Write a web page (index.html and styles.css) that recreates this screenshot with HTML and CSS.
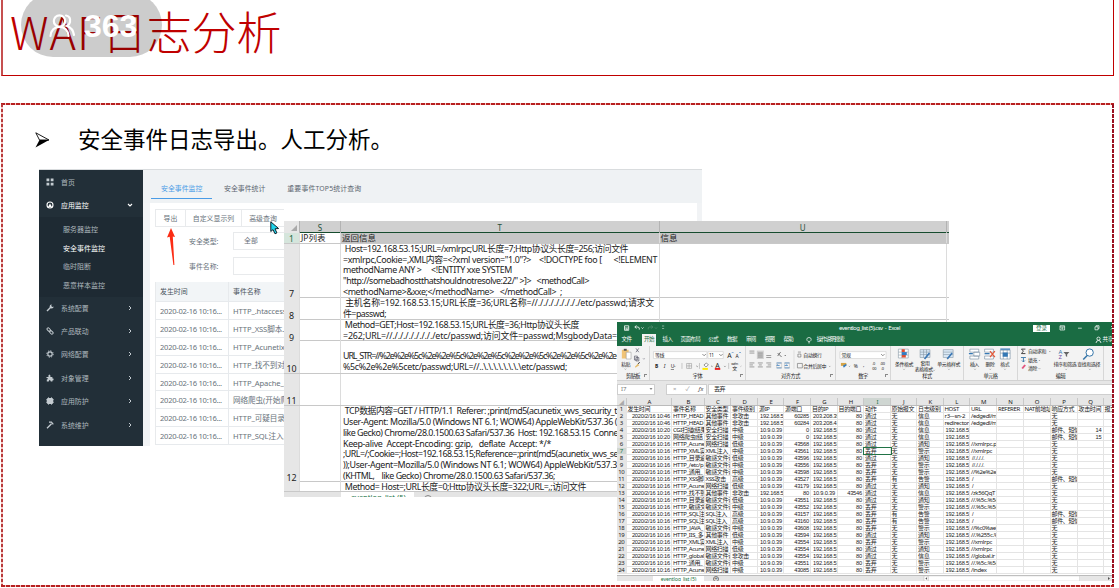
FILE: index.html
```html
<!DOCTYPE html>
<html>
<head>
<meta charset="utf-8">
<title>WAF日志分析</title>
<link rel="stylesheet" href="styles.css">
</head>
<body>
<main class="slide">
  <header class="title-box"><h1><span data-w="92">WAF</span><span class="title-cjk">日志分析</span></h1></header>
  <section class="content-box">
    <div class="bullet">
      <svg width="15" height="16" viewBox="0 0 15 16"><path d="M.8.8 14 8 4.500 8Z" fill="#fff" stroke="#000" stroke-width=".9"/><path d="M.5 15.500 4.500 8H14Z"/></svg>
      <p>安全事件日志导出。人工分析。</p>
    </div>
  </section>

  <section class="console">
    <nav class="side">
      <div class="item home"><svg viewBox="0 0 8 8"><path d="M.5.5h2.800v2.800H.5zM4.700.5h2.800v2.800H4.700zM.5 4.700h2.800v2.800H.5zM4.700 4.700h2.800v2.800H4.700z" fill="#c3cbd0"/></svg><span>首页</span></div>
      <div class="item open"><svg viewBox="0 0 8 8"><circle cx="4" cy="4" r="3" fill="none" stroke="#fff" stroke-width="1.1"/><path d="M2 6 4 2.600 6 6Z" fill="#fff"/></svg><span>应用监控</span><svg class="chev" viewBox="0 0 6 6"><path d="M1 2l2 2 2-2" fill="none" stroke="#fff" stroke-width="1.1"/></svg></div>
      <div class="sub"><span>服务器监控</span><span class="on">安全事件监控</span><span>临时阻断</span><span>恶意样本监控</span></div>
      <div class="item"><svg viewBox="0 0 8 8"><path d="M1 7 4.700 3.300" stroke="#c3cbd0" stroke-width="1.4"/><path d="M5.800.5A2 2 0 1 0 7.600 2.400L6.400 3 5.200 2Z" fill="#c3cbd0"/></svg><span>系统配置</span><svg class="chev" viewBox="0 0 6 6"><path d="M2 1l2 2-2 2" fill="none" stroke="#c3cbd0"/></svg></div>
      <div class="item"><svg viewBox="0 0 8 8"><g fill="none" stroke="#c3cbd0"><rect x=".8" y="1.4" width="3.8" height="2.4" rx="1.2" transform="rotate(45 2.7 2.6)"/><rect x="3.5" y="4.2" width="3.8" height="2.4" rx="1.2" transform="rotate(45 5.4 5.4)"/></g></svg><span>产品联动</span><svg class="chev" viewBox="0 0 6 6"><path d="M2 1l2 2-2 2" fill="none" stroke="#c3cbd0"/></svg></div>
      <div class="item"><svg viewBox="0 0 8 8"><circle cx="4" cy="4" r="2.2" fill="none" stroke="#c3cbd0" stroke-width="1.2"/><circle cx="4" cy="4" r="3.2" fill="none" stroke="#c3cbd0" stroke-dasharray="1.3 1.2"/></svg><span>网络配置</span><svg class="chev" viewBox="0 0 6 6"><path d="M2 1l2 2-2 2" fill="none" stroke="#c3cbd0"/></svg></div>
      <div class="item"><svg viewBox="0 0 8 8"><path d="M.5 3h2Q2 .5 3.400.5T4.400 3H6.400V4.600Q8 4.300 7.600 5.600T6.400 6.200V7.500H4.800Q4.500 6 3.700 6T2.800 7.500H.8V5.600Q2 5.200 2 4.700T.5 4Z" fill="#c3cbd0"/></svg><span>对象管理</span><svg class="chev" viewBox="0 0 6 6"><path d="M2 1l2 2-2 2" fill="none" stroke="#c3cbd0"/></svg></div>
      <div class="item"><svg viewBox="0 0 8 8"><rect x="1" y="1" width="6" height="6" rx="1" fill="#c3cbd0"/><path d="M0 2.500h8M0 4h8M0 5.500h8M2.500 0v8M5.500 0v8" stroke="#c3cbd0" stroke-width=".6"/></svg><span>应用防护</span><svg class="chev" viewBox="0 0 6 6"><path d="M2 1l2 2-2 2" fill="none" stroke="#c3cbd0"/></svg></div>
      <div class="item"><svg viewBox="0 0 8 8"><path d="M1 7.200 5.500 2.700M3 1.200h2.400L7.300 3.400" fill="none" stroke="#c3cbd0" stroke-width="1.3"/></svg><span>系统维护</span><svg class="chev" viewBox="0 0 6 6"><path d="M2 1l2 2-2 2" fill="none" stroke="#c3cbd0"/></svg></div>
    </nav>
    <div class="console-main">
      <div class="tabs"><span class="active">安全事件监控</span><span>安全事件统计</span><span data-w="74">重要事件TOP5统计查询</span></div>
      <div class="panel">
        <div class="buttons"><span class="b1">导出</span><span class="b2">自定义显示列</span><span class="b3">高级查询</span></div>
        <div class="field"><label>安全类型:</label><div class="input">全部</div></div>
        <div class="field second"><label>事件名称:</label><div class="input"></div></div>
        <div class="events" id="events"></div>
      </div>
    </div>
  </section>

  <svg class="red-arrow" width="12" height="38" viewBox="0 0 12 38"><path d="M5 0 9 9 6.800 8.600 8.400 37 7.400 37 3.700 8.800 1 9.400Z" fill="#fb2c14"/></svg>

  <section class="sheet">
    <div class="srow letters"><b><i class="corner"></i></b><div>S</div><div>T</div><div>U</div><div></div></div>
    <div class="srow first"><b>1</b><div class="s1">JP列表</div><div>返回信息</div><div>信息</div><div></div></div>
    <div class="srow r7"><b>7</b><div></div><div class="t">
<p data-w="285"> Host=192.168.53.15;URL=/xmlrpc;URL长度=7;Http协议头长度=256;访问文件</p>
<p data-w="314">=xmlrpc,Cookie=,XML内容=&lt;?xml version="1.0"?&gt;    &lt;!DOCTYPE foo [      &lt;!ELEMENT</p>
<p data-w="169">methodName ANY &gt;     &lt;!ENTITY xxe SYSTEM</p>
<p data-w="246">"http://somebadhostthatshouldnotresolve:22/" &gt;]&gt;   &lt;methodCall&gt;</p>
<p data-w="219">&lt;methodName&gt;&amp;xxe;&lt;/methodName&gt;   &lt;/methodCall&gt;  ;</p></div><div></div><div></div></div>
    <div class="srow r8"><b>8</b><div></div><div class="t">
<p data-w="311"> 主机名称=192.168.53.15;URL长度=36;URL名称=//././././././././etc/passwd;请求文</p>
<p data-w="43">件=passwd;</p></div><div></div><div></div></div>
    <div class="srow r9"><b>9</b><div></div><div class="t">
<p data-w="236"> Method=GET;Host=192.168.53.15;URL长度=36;Http协议头长度</p>
<p data-w="274">=262;URL=//././././././././etc/passwd;访问文件=passwd;MsgbodyData=</p></div><div></div><div></div></div>
    <div class="srow r10"><b>10</b><div></div><div class="t">
<p data-w="273">URL_STR=//%2e%2e%5c%2e%2e%5c%2e%2e%5c%2e%2e%5c%2e%2e%5c%2e%2e</p>
<p data-w="224">%5c%2e%2e%5cetc/passwd;URL=//..\.\.\.\.\.\.\.\etc/passwd;</p></div><div></div><div></div></div>
    <div class="srow r11"><b>11</b><div></div><div></div><div></div><div></div></div>
    <div class="srow r12"><b>12</b><div></div><div class="t">
<p data-w="274"> TCP数据内容=GET / HTTP/1.1  Referer: ;print(md5(acunetix_wvs_security_t</p>
<p data-w="274">User-Agent: Mozilla/5.0 (Windows NT 6.1; WOW64) AppleWebKit/537.36 (</p>
<p data-w="275">like Gecko) Chrome/28.0.1500.63 Safari/537.36  Host: 192.168.53.15  Conne</p>
<p data-w="208">Keep-alive  Accept-Encoding: gzip,   deflate  Accept: */*</p>
<p data-w="275">;URL=/;Cookie=;Host=192.168.53.15;Reference=;print(md5(acunetix_wvs_se</p>
<p data-w="274">));User-Agent=Mozilla/5.0 (Windows NT 6.1; WOW64) AppleWebKit/537.3</p>
<p data-w="212">(KHTML,    like Gecko) Chrome/28.0.1500.63 Safari/537.36;</p></div><div></div><div></div></div>
    <div class="srow r13"><b></b><div></div><div class="t"><p data-w="243"> Method= Host=;URL长度=0;Http协议头长度=322;URL=,;访问文件</p></div><div></div><div></div></div>
    <div class="sheet-tabs"><span>eventlog_list (5)</span><i></i></div>
  </section>

  <svg class="pointer" width="10" height="14" viewBox="0 0 10 14"><path d="M.8.8V10.500L3 8.600 5 12.800 6.900 11.900 5 7.800 8.600 7.500Z" fill="#1fd3ea" stroke="#10222c" stroke-width="1"/></svg>

  <section class="excel">
    <div class="titlebar">
      <svg class="quick" width="60" height="12" viewBox="0 0 60 12" fill="none" stroke="#fff" stroke-width=".8"><path d="M7.500 3.800h4.200v4.500H7.500zM7.500 6h4.200M9 8v-1h1.300v1M18 5h3q1.800.2 1.300 2.600M19.400 3.400 17.800 5l1.600 1.600"/><path d="M24.500 5.500l1 1 1-1"/><path d="M35.500 5h-3q-1.800.2-1.300 2.400M34.300 3.400 35.800 5l-1.500 1.600M38 5.500l1 1 1-1" stroke="#548e70"/><path d="M45 4h2.200M45.100 6l1 1 1-1" stroke="#9dc0ad"/></svg>
      <span class="doc" data-w="61">eventlog_list (5).csv  -  Excel</span>
      <span class="login">登录</span>
      <svg class="controls" width="63" height="12" viewBox="0 0 63 12" fill="none" stroke="#fff" stroke-width=".7"><path d="M10 3.800h4.600v4.200H10zM10 5h4.600M12.300 7.500V5.800M11.500 6.500l.8-.8.8.8M28 6.200h3.800M45 4.800h3v3h-3zM46 4.600V3.700h3v3h-.8M61 4l3.500 3.500M64.500 4 61 7.500"/></svg>
    </div>
    <div class="menubar">
      <span class="m m-file">文件</span><span class="m m-on">开始</span><span class="m">插入</span><span class="m m-wide">页面布局</span><span class="m">公式</span><span class="m">数据</span><span class="m">审阅</span><span class="m">视图</span><span class="m">帮助</span>
      <svg width="10" height="10" viewBox="0 0 10 10" fill="none" stroke="#fff" stroke-width=".7"><path d="M4 6.400Q2.700 5.500 2.800 4.200 3 2.500 5 2.500T7.200 4.200Q7.300 5.500 6 6.400ZM4.200 7.800h1.700"/></svg><span class="tell">操作说明搜索</span>
      <span class="share"><svg width="7" height="8" viewBox="0 0 7 8" fill="none" stroke="#fff" stroke-width=".8"><circle cx="3.5" cy="2.7" r="1.6"/><path d="M1 7q.4-2.600 2.500-2.600T6 7"/></svg>共享</span>
    </div>
    <div class="ribbon">
      <div class="group g1"><svg viewBox="0 0 33 26"><path d="M5 3.500h7v9H5z" fill="#f1c477"/><path d="M7 2.500h3v2H7z" fill="#555"/><path d="M9.500 6h5v7h-5z" fill="#fff" stroke="#888" stroke-width=".5"/><g stroke="#556" stroke-width=".7" fill="none"><path d="M19.500 2l3 4M22.500 2l-3 4M18 10h3v4h-3zM19.500 11.500h3v3.500h-3z"/><path d="M27 12.500l.7.7.7-.7"/></g><path d="M18.500 21l3-3 1.500 1.500-4 2.500z" fill="#e5bd6d"/><path d="M21.500 18l2-1.500" stroke="#333"/><text x="4.500" y="20">粘贴</text><path d="M8 23l.7.7.7-.7" fill="none" stroke="#555" stroke-width=".5"/></svg><span>剪贴板</span><i></i></div>
      <div class="group g2"><svg viewBox="0 0 96 26"><path d="M3.500 5.500h54v7h-54zM58.500 5.500h15.500v7H58.500z" fill="#fff" stroke="#ccc" stroke-width=".6"/><text x="5" y="11">等线</text><text x="59.500" y="11">11</text><g fill="none" stroke="#555" stroke-width=".7"><path d="M53 8l1.700 1.700L56.400 8M70 8l1.700 1.700L73.400 8M24.500 20l.7.7.7-.7M47 20l.7.7.7-.7M62 20l.7.7.7-.7M75 20l.7.7.7-.7"/></g><text x="78" y="11.500" class="big">A</text><text x="86.500" y="11.500">A</text><path d="M82.500 7l1-1 1 1M90 7l1-1 1 1" fill="none" stroke="#347bc0" stroke-width=".6"/><text x="5" y="22.500" class="bold">B</text><text x="14" y="22.500" class="ital">I</text><text x="21" y="22.500" class="under">U</text><path d="M37 17.500h5v5h-5zM39.500 17.500v5M37 20h5" fill="none" stroke="#888" stroke-width=".5"/><path d="M54.500 19l2.500-2 2 2-2.500 2z" fill="#fff" stroke="#555" stroke-width=".6"/><path d="M53 22h5.500v2H53z" fill="#ffeb00"/><text x="66" y="21.700" class="big">A</text><path d="M65.500 22h5.500v2h-5.500z" fill="#e82020"/><text x="82" y="18.600" class="tiny">wén</text><text x="83" y="24">文</text><path d="M91 20l.7.7.7-.7M32.300 17v6M50 17v6M79.500 17v6" fill="none" stroke="#999" stroke-width=".5"/></svg><span>字体</span><i></i></div>
      <div class="group g3"><svg viewBox="0 0 90 26"><path d="M11 4.500h7v8.500h-7z" fill="#cfcfcf"/><g stroke="#777" stroke-width=".7"><path d="M3.500 5h5M3.500 7h5M12 7h5M12 9h5M12 11h5M20.500 9.500h5M20.500 11.500h5M3.500 17h5M3.500 19h3.500M3.500 21h5M12 17h5M13 19h3M12 21h5M20.500 17h5M22 19h3.500M20.500 21h5"/></g><path d="M32 7l4 4M32 10l3-4M39 9l.7.7.7-.7" fill="none" stroke="#555" stroke-width=".8"/><g fill="none" stroke="#347bc0" stroke-width=".8"><path d="M31 17h5M31 22h5M34 19.500h-3l1-1M39 17h5M39 22h5M39 19.500h3l-1-1"/></g><path d="M31 17h5v5h-5zM39 17h5v5h-5z" fill="none" stroke="#aaa" stroke-width=".4"/><path d="M52.500 6h3M52.500 8h3v3h-3v-3M52 17.500h5v4.500h-5z" fill="none" stroke="#666" stroke-width=".6"/><path d="M48.500 4v19" stroke="#ccc" stroke-width=".5"/><text x="58" y="11">自动换行</text><text x="58" y="22">合并后居中</text><path d="M84 20l.7.7.7-.7" fill="none" stroke="#555" stroke-width=".5"/></svg><span>对齐方式</span><i></i></div>
      <div class="group g4"><svg viewBox="0 0 55 26"><path d="M4 5.500h47v7H4z" fill="#fff" stroke="#ccc" stroke-width=".6"/><text x="5.500" y="11">常规</text><path d="M46 8l1.700 1.700L49.400 8" fill="none" stroke="#555" stroke-width=".7"/><path d="M5 17h5.500v3H5z" fill="#d5a447"/><path d="M7 20l3-2 1 1-3 3z" fill="#347bc0"/><path d="M13 20l.7.7.7-.7" fill="none" stroke="#555" stroke-width=".5"/><text x="18" y="22.500">%</text><text x="27.500" y="21">,</text><text x="37" y="19" class="tiny">.0</text><text x="37" y="24" class="tiny">00</text><text x="45" y="19" class="tiny">.00</text><text x="46" y="24" class="tiny">.0</text></svg><span>数字</span><i></i></div>
      <div class="group g5"><svg viewBox="0 0 73 26"><path d="M7.500 3h10v9h-10zM7.500 6h10M7.500 9h10M11 3v9" fill="#fff" stroke="#8797a5" stroke-width=".6"/><path d="M11 3h3v3h-3zM11 9h4v2.500h-4z" fill="#e24e31"/><path d="M11 6h5v3h-5z" fill="#347bc0"/><path d="M29.500 3.500h10v8h-10zM29.500 6h10M29.500 8.500h10M33 3.500v8M36 3.500v8M53 3.500h10v8H53zM53 6h10M53 8.500h10" fill="#d9e8f5" stroke="#8797a5" stroke-width=".6"/><path d="M34 13l5-6M57 13l5-6" stroke="#3b78b5" stroke-width="1.700"/><text x="4" y="20">条件格式</text><text x="30" y="19.300">套用</text><text x="24" y="25.300">表格格式</text><text x="47" y="20">单元格样式</text><path d="M12.500 23l.7.7.7-.7M43 24l.7.7.7-.7M58 23l.7.7.7-.7" fill="none" stroke="#555" stroke-width=".5"/></svg><span>样式</span></div>
      <div class="group g6"><svg viewBox="0 0 54 26"><path d="M6 3h9v3H6zM10 6h6v4h-6zM6 10h9v3H6zM21 3h9v3h-9zM21 10h9v3h-9zM37 4h10v9H37zM37 7h10M40 4v9M44 4v9" fill="#fff" stroke="#70889b" stroke-width=".6"/><path d="M5 7.500h4M21 7.500h5M40 7h4v3h-4zM37 3h10" stroke="#3478b5" stroke-width="1.200" fill="#3478b5"/><path d="M26.500 5l5 6M31.500 5l-5 6" stroke="#e45635" stroke-width="1.200"/><text x="6" y="20">插入</text><text x="22" y="20">删除</text><text x="37" y="20">格式</text><path d="M10.500 23l.7.7.7-.7M26 23l.7.7.7-.7M41 23l.7.7.7-.7" fill="none" stroke="#555" stroke-width=".5"/></svg><span>单元格</span></div>
      <div class="group g7"><svg viewBox="0 0 86 26"><path d="M7.500 3h-4l2 2-2 2.500h4" fill="none" stroke="#333" stroke-width=".9"/><text x="10" y="7">自动求和</text><path d="M3 11.500h5M5.500 12v4M4 14.500l1.500 1.500L7 14.500" fill="none" stroke="#3474a8" stroke-width=".9"/><text x="10" y="16">填充</text><path d="M3.500 22l3-3.500 1.500 1-3 3.500z" fill="#e2567e"/><text x="10" y="24.500">清除</text><path d="M31.500 5l.7.7.7-.7M21 14l.7.7.7-.7M21 22.500l.7.7.7-.7M48 23l.7.7.7-.7M72 23l.7.7.7-.7" fill="none" stroke="#555" stroke-width=".5"/><text x="41" y="7.500" class="blue">A</text><text x="41" y="13" class="purple">Z</text><path d="M46 6h6l-2.300 2.500V11l-1.400-1V8.500z" fill="#666"/><circle cx="72.500" cy="6.500" r="3.700" fill="#fff" stroke="#3474a8"/><path d="M70 9.500l-4 4" stroke="#3474a8" stroke-width="1.500"/><text x="36" y="20">排序和筛选</text><text x="60" y="20">查找和选择</text></svg><span>编辑</span></div>
    </div>
    <div class="formula"><div class="name"><span>I7</span><svg width="6" height="6" viewBox="0 0 6 6"><path d="M1.500 2h3L3 4z" fill="#888"/></svg></div><div class="fx"><span>×</span><span>✓</span><em>fx</em></div><div class="value">丢弃</div></div>
    <div class="grid" id="grid"></div>
    <div class="excel-tabs"><span class="book">eventlog_list (5)</span><i>+</i><svg width="195" height="7" viewBox="0 0 195 7"><path d="M2 3.500v.1M6 1h4v5H6z" fill="#fff" stroke="#bbb" stroke-width=".5"/><path d="M9 2.200v2.500L7.300 3.500z" fill="#555"/><path d="M10.500 1h151v5h-151z" fill="#fff" stroke="#ccc" stroke-width=".5"/><path d="M190 2v3l2-1.500z" fill="#555"/></svg></div>
  </section>

  <i class="edge edge-top"></i><i class="edge edge-left"></i><i class="edge edge-right"></i><i class="edge edge-bottom"></i>

  <div class="viewers">
    <svg width="27" height="24" viewBox="0 0 27 24" fill="none" stroke="#fff" stroke-width="2.200" stroke-linecap="round"><circle cx="10.500" cy="7" r="5.700"/><path d="M1.500 22Q2.500 13 10.500 13T19.500 22M17 1.500q5 1 4 6.500-.6 3-3 4 6 2 7 9"/></svg>
    <span>363</span>
  </div>
</main>
<script src="app.js"></script>
</body>
</html>
```
FILE: app.js
```js
function add(parent, cls, text) {
  const el = document.createElement('div');
  el.className = cls;
  if (text !== undefined) el.textContent = text;
  parent.appendChild(el);
  return el;
}

// Event list in the console
const events = document.getElementById('events');
const names = ['HTTP_.htaccess..', 'HTTP_XSS脚本...', 'HTTP_Acunetix..', 'HTTP_找不到对象', 'HTTP_Apache_...', '网络爬虫(开始爬', 'HTTP_可疑目录..', 'HTTP_SQL注入...'];
const head = add(events, 'ev head');
add(head, 'c1', '发生时间');
add(head, 'c2', '事件名称');
names.forEach(n => {
  const r = add(events, 'ev');
  add(r, 'c1', '2020-02-16 10:16...');
  add(r, 'c2', n);
});

// Exported log grid
const T46 = '2020/2/16 10:46', T20 = '2020/2/16 10:20', T16 = '2020/2/16 10:16';
const IP = '192.168.53', IN = '10.9.0.39', MAIL = '邮件、短信';
const rows = [
  ['发生时间', '事件名称', '安全类型', '事件级别', '源IP', '源端口', '目的IP', '目的端口', '动作', '原始报文', '日志级别', 'HOST', 'URL', 'REFERER', 'NAT前地址', '响应方式', '攻击时间', '报文'],
  [T46, 'HTTP_HEAD', '其他事件', '非攻击', IP, '60285', '203.208.39', '80', '通过', '无', '信息', 'r3---sn-2', '/edgedl/m', '', '', '无', ''],
  [T46, 'HTTP_HEAD', '其他事件', '非攻击', IP, '60284', '203.208.41', '80', '通过', '无', '信息', 'redirector', '/edgedl/m', '', '', '无', ''],
  [T20, 'CGI扫描(结果', '安全扫描', '中级', IN, '0', IP, '80', '通过', '无', '信息', IP, '', '', '', MAIL, '14'],
  [T20, '网络爬虫(结', '安全扫描', '中级', IN, '0', IP, '80', '通过', '无', '信息', IP, '', '', '', MAIL, '15'],
  [T16, 'HTTP_Acune', '网络扫描', '低级', IN, '43568', IP, '80', '通过', '无', '通知', IP, '//xmlrpc.p', '', '', '无', ''],
  [T16, 'HTTP_XML实', 'XML注入', '中级', IN, '43561', IP, '80', '丢弃', '无', '警示', IP, '//xmlrpc', '', '', '无', ''],
  [T16, 'HTTP_目录遍', '敏感文件访', '低级', IN, '43596', IP, '80', '通过', '无', '通知', IP, '//./././.', '', '', '无', ''],
  [T16, 'HTTP_/etc/p', '敏感文件访', '中级', IN, '43556', IP, '80', '丢弃', '无', '警示', IP, '//./././.', '', '', '无', ''],
  [T16, 'HTTP_通用_', '敏感文件访', '中级', IN, '43598', IP, '80', '丢弃', '无', '警示', IP, '//%2e%2e%', '', '', '无', ''],
  [T16, 'HTTP_XSS脚', 'XSS攻击', '高级', IN, '43527', IP, '80', '丢弃', '有', '告警', IP, '/', '', '', MAIL, ''],
  [T16, 'HTTP_Acune', '网络扫描', '低级', IN, '43179', IP, '80', '通过', '无', '通知', IP, '/', '', '', '无', ''],
  [T16, 'HTTP_找不到', '其他事件', '非攻击', IP, '80', '10.9.0.39', '43546', '通过', '无', '信息', IP, '/zk56QqT', '', '', '无', ''],
  [T16, 'HTTP_目录遍', '敏感文件访', '低级', IN, '43551', IP, '80', '通过', '无', '通知', IP, '//.%5c.%5c', '', '', '无', ''],
  [T16, 'HTTP_敏感文', '敏感文件访', '中级', IN, '43552', IP, '80', '丢弃', '无', '警示', IP, '//.%5c.%5c', '', '', '无', ''],
  [T16, 'HTTP_SQL注', 'SQL注入', '高级', IN, '43157', IP, '80', '丢弃', '有', '告警', IP, '/', '', '', MAIL, ''],
  [T16, 'HTTP_SQL注', 'SQL注入', '高级', IN, '43160', IP, '80', '丢弃', '有', '告警', IP, '/', '', '', MAIL, ''],
  [T16, 'HTTP_JAVA_', '敏感文件访', '中级', IN, '43608', IP, '80', '丢弃', '无', '警示', IP, '//%c0%ae%', '', '', '无', ''],
  [T16, 'HTTP_IIS_多', '其他事件', '低级', IN, '43594', IP, '80', '通过', '无', '通知', IP, '//.%255c.%', '', '', '无', ''],
  [T16, 'HTTP_XML实', 'XML注入', '中级', IN, '43554', IP, '80', '丢弃', '无', '警示', IP, '//xmlrpc', '', '', '无', ''],
  [T16, 'HTTP_Acune', '网络扫描', '低级', IN, '43554', IP, '80', '通过', '无', '通知', IP, '//xmlrpc', '', '', '无', ''],
  [T16, 'HTTP_global', '敏感文件访', '非攻击', IN, '43554', IP, '80', '通过', '无', '信息', IP, '//global.ir', '', '', '无', ''],
  [T16, 'HTTP_通用_', '敏感文件访', '中级', IN, '43551', IP, '80', '丢弃', '无', '警示', IP, '//.%5c.%5c', '', '', '无', ''],
  [T16, 'HTTP_Acune', '网络扫描', '中级', IN, '43085', IP, '80', '丢弃', '无', '警示', IP, '/index', '', '', '无', '']
];
const grid = document.getElementById('grid');
const letters = add(grid, 'gr cols');
add(letters, 'num', '◢');
'ABCDEFGHIJKLMNOPQR'.split('').forEach(l => add(letters, l === 'I' ? 'picked' : '', l === 'R' ? '' : l));
rows.forEach((r, i) => {
  const row = add(grid, 'gr');
  add(row, i === 6 ? 'num picked' : 'num', i + 1);
  for (let c = 0; c < 18; c++) {
    const v = r[c] || '';
    let cls = '';
    if (i && [0, 5, 7, 16].includes(c)) cls = 'right';
    if (/^[\d./: ]+$/.test(v)) cls += ' digits';
    if (i === 6 && c === 8) cls += ' cursor';
    add(row, cls, v);
  }
});

// Track text so that each line fills its measured width
document.querySelectorAll('[data-w]').forEach(el => {
  const diff = +el.dataset.w - el.getBoundingClientRect().width;
  el.style.letterSpacing = diff / el.textContent.length + 'px';
});
```
FILE: styles.css
```css
* { box-sizing: border-box; }
body { margin: 0; background: #fff; font-family: "Noto Sans", "Noto Sans CJK SC", sans-serif; }
p, h1 { margin: 0; font-weight: 400; }
i, em { font-style: normal; }
[data-w] { display: inline-block; width: max-content; white-space: pre; }
.slide { position: relative; width: 1119px; height: 588px; overflow: hidden; }

/* Slide title and body */
.title-box { width: 1113px; height: 76px; margin-left: 1px; padding-left: 7px; border: solid #c00000; border-width: 0 1px 1.5px 2px; border-left-color: #c65050; }
.title-box h1 { display: flex; font: 300 45px/62px "Noto Sans CJK SC", sans-serif; color: #c00000; }
.title-cjk { letter-spacing: -.2px; }
.content-box { padding: 48px 0 0 35px; }
.bullet { display: flex; align-items: center; gap: 28px; height: 32px; }
.bullet p { font: 22.5px/32px "Noto Sans CJK SC", sans-serif; color: #000; margin-top: -4px; }
.edge { position: absolute; }
.edge-top, .edge-bottom { left: 1px; width: 1113px; height: 2px; background: repeating-linear-gradient(90deg, #b82020 0 4px, #f3c0bc 4px 5px); }
.edge-left, .edge-right { top: 104px; height: 483px; width: 2px; background: repeating-linear-gradient(#b83a3a 0 3px, #f6c6c2 3px 5px); }
.edge-top { top: 103px; }
.edge-bottom { top: 585px; }
.edge-left { left: 1px; }
.edge-right { left: 1112px; background: repeating-linear-gradient(#9c1020 0 4px, #fff 4px 5px); }

.viewers { position: absolute; left: 21px; top: -7px; width: 141px; height: 64px; padding: 1px 0 0 28px; border-radius: 32px; background: rgba(0,0,0,.2); display: flex; align-items: center; gap: 8px; }
.viewers span { font: bold 32px/36px "Liberation Sans", sans-serif; color: #fff; }

/* Monitoring console */
.console { position: absolute; left: 39px; top: 169px; width: 663px; height: 277px; display: flex; border-top: 1px solid #d9dcde; font-size: 6.9px; overflow: hidden; }
.side { width: 104px; background: #222f38; color: #aeb8be; }
.item { display: flex; align-items: center; height: 23.45px; padding: 0 10px 0 7px; }
.item span { flex: 1; margin-left: 7px; }
.item svg { width: 8px; height: 8px; }
.item .chev { width: 6px; height: 6px; }
.item.open { color: #fff; }
.sub { display: flex; flex-direction: column; height: 80px; margin-bottom: -1px; padding: 4px 0 0 24px; background: #1e2a33; font-size: 7px; }
.sub span { line-height: 18.7px; }
.sub .on { color: #fff; }
.console-main { flex: 1; background: linear-gradient(90deg, #f1f3f5 0 7px, transparent 7px 554px, #f1f3f5 554px) 0 33px no-repeat, linear-gradient(#eff2f4 0 33px, #fff 33px); padding-left: 8px; }
.tabs { display: flex; height: 29px; font-size: 6.9px; line-height: 37px; color: #5c6670; }
.tabs span { padding: 0; margin-right: 22px; }
.tabs .active { width: 61px; margin-right: 12px; padding-left: 10px; color: #4a9ce6; border-bottom: 1px solid #4a9ce6; }
.panel { padding: 10px 0 0 4px; color: #68727a; }
.buttons { display: flex; height: 18px; line-height: 17px; }
.buttons span { border: 1px solid #e8eaec; border-right: 0; text-align: center; white-space: nowrap; }
.b1 { width: 30px; }
.b2 { width: 56px; }
.b3 { width: 43px; }
.field { display: flex; align-items: center; margin-top: 4px; height: 19px; }
.field label { width: 78px; padding-left: 34px; white-space: nowrap; }
.input { width: 70px; height: 18px; padding-left: 10px; line-height: 16px; border: 1px solid #e8eaec; }
.field.second { margin-top: 6px; }
.events { width: 130px; margin-top: 7px; border-left: 1px solid #e8eaec; }
.ev { display: flex; height: 17.9px; line-height: 18px; border-bottom: 1px solid #e7eaed; font-size: 7.6px; white-space: nowrap; overflow: hidden; }
.ev.head { height: 20px; line-height: 20px; background: #f2f5f7; color: #48525b; font-size: 6.9px; }
.c1 { flex: none; width: 73px; padding-left: 4px; border-right: 1px solid #e7eaed; letter-spacing: -.28px; }
.head .c1, .head .c2 { letter-spacing: 0; }
.c2 { padding-left: 4px; letter-spacing: -.1px; }
.red-arrow { position: absolute; left: 166px; top: 228px; }
.pointer { position: absolute; left: 270px; top: 221px; }

/* Enlarged worksheet */
.sheet { position: absolute; left: 284px; top: 221px; width: 665px; height: 276px; background: #fff; color: #222; font-size: 8.9px; overflow: hidden; }
.srow { display: grid; grid-template-columns: 16px 41px 318.5px 287.5px 2px; border-bottom: 1px solid #c8c8c8; }
.srow > * { border-right: 1px solid #dcdcdc; min-width: 0; }
.srow > :last-child { border-right: 0; }
.srow b { display: flex; align-items: flex-end; justify-content: center; background: #e6e6e6; font-weight: 400; line-height: 9px; }
.letters { height: 12px; border-bottom: 1.5px solid #164c2e; background: #d0d0d0; font-size: 8px; line-height: 13px; text-align: center; color: #28513b; }
.letters > * { border-color: #b3b3b3; }
.letters b { align-items: center; justify-content: flex-end; padding-right: 2px; }
.corner { border: solid transparent; border-width: 0 0 6px 6px; border-bottom-color: #aaa; }
.first { height: 10.8px; line-height: 10px; background: #c6c6c6; font-size: 8.5px; }
.first b { background: #d5e5dc; color: #1d6a43; }
.first .s1 { background: #fff; }
.first > div { padding-left: 1px; }
.t { padding-left: 2px; display: flex; flex-direction: column; justify-content: flex-end; }
.t p { line-height: 10.8px; }
.r7 { height: 54.2px; }
.r8 { height: 22px; }
.r9 { height: 21.5px; }
.r10 { height: 32.5px; }
.r11 { height: 32.3px; }
.r12 { height: 76px; }
.r13 { height: 9.5px; overflow: hidden; }
.r13 .t { justify-content: flex-start; }
.sheet-tabs { display: flex; gap: 18px; height: 7px; padding-left: 57px; background: linear-gradient(90deg, #e4e4e4 57px, #fff 57px 130px, #e4e4e4 130px); overflow: hidden; font-size: 7.5px; line-height: 10px; color: #217346; }
.sheet-tabs span { padding-left: 10px; }
.sheet-tabs i { width: 8px; height: 8px; margin-top: 3px; border: 1px solid #888; border-radius: 50%; }

/* Spreadsheet window */
.excel { position: absolute; left: 617px; top: 322px; width: 496px; height: 259px; background: #e6e6e6; color: #222; font-size: 6px; overflow: hidden; }
.titlebar { display: flex; align-items: center; height: 12px; background: #1a6c43; color: #fff; }
.doc { margin-left: 162px; font-size: 6px; }
.login { flex: none; width: 17px; height: 7px; margin-left: 133px; background: #fff; color: #1a6c43; font-size: 5.5px; line-height: 7px; text-align: center; }
.controls { flex: none; }
.quick { flex: none; }
.menubar { display: flex; align-items: center; height: 11.5px; background: #1a6c43; color: #fff; font-size: 5.5px; line-height: 11.5px; white-space: nowrap; }
.m { width: 18.8px; text-align: center; letter-spacing: -.6px; }
.m-file { width: 19px; margin-right: 6px; }
.m-on { width: 14px; margin-right: 2px; background: #f3f3f3; color: #1a6c43; height: 11.5px; }
.m-wide { width: 27px; }
.menubar > svg { margin-left: 6px; }
.tell { margin-left: 3px; letter-spacing: -1px; }
.share { display: flex; align-items: center; gap: 1px; margin-left: auto; letter-spacing: -.3px; }
.ribbon { display: flex; height: 35px; background: #f3f3f3; border-bottom: 1px solid #d2d2d2; }
.group { position: relative; flex: none; height: 34px; border-right: 1px solid #d7d7d7; text-align: center; }
.group svg { display: block; width: 100%; height: 26px; }
.group svg text { font-size: 5px; fill: #222; letter-spacing: -.4px; }
.group svg .big { font-size: 7px; }
.group svg .tiny { font-size: 4px; }
.group svg .bold { font-weight: 700; }
.group svg .ital { font-style: italic; }
.group svg .under { text-decoration: underline; }
.group svg .blue { fill: #3474a8; font-size: 6px; }
.group svg .purple { fill: #7048a0; font-size: 6px; }
.group span { display: block; font-size: 5.2px; line-height: 8px; letter-spacing: -.5px; }
.group i { position: absolute; right: 2px; bottom: 3px; width: 3px; height: 3px; border: solid #888; border-width: .5px 0 0 .5px; }
.g1 { width: 33px; }
.g2 { width: 96px; }
.g3 { width: 90px; }
.g4 { width: 55px; }
.g5 { width: 73px; }
.g6 { width: 54px; }
.g7 { width: 86px; }
.formula { display: flex; height: 17.5px; padding: 3.5px 0; }
.formula > div { background: #fff; border: .5px solid #cfcfcf; line-height: 9px; }
.name { display: flex; justify-content: space-between; align-items: center; width: 38px; padding-left: 3px; margin-right: 11px; color: #777; }
.fx { display: flex; gap: 9px; width: 41px; padding-left: 6px; color: #999; }
.fx em { font-style: italic; color: #444; }
.value { flex: 1; margin-left: 1px; padding-left: 5px; letter-spacing: -.6px; }
.grid { height: 176.5px; background: #fff; overflow: hidden; }
.gr { display: grid; grid-template-columns: 9.5px 45.5px 32.5px 26.5px 27px 26px 27px 26.5px 26.5px 26.5px 26.5px 26.5px 26.5px 27px 26.5px 27px 27px 26px 9.5px; height: 7.02px; border-bottom: 1px solid #e4e4e4; }
.gr > div { min-width: 0; padding-left: 1px; border-right: 1px solid #e4e4e4; font-size: 6px; line-height: 7px; letter-spacing: -.35px; white-space: nowrap; overflow: hidden; color: #1a1a1a; }
.gr .digits { padding-left: 2px; font-family: "Liberation Sans", sans-serif; font-size: 5.7px; letter-spacing: -.2px; }
.gr .right { text-align: right; padding: 0 1px 0 0; }
.gr .num { background: #e6e6e6; padding: 0; text-align: center; }
.gr.cols { height: 8px; background: #e6e6e6; border-color: #bbb; }
.gr.cols > div { text-align: center; line-height: 8px; border-color: #c8c8c8; }
.gr.cols .num { color: #aaa; font-size: 5px; }
.gr .picked, .gr.cols .picked { background: #cfd6d2; color: #217346; }
.gr .cursor { outline: 1px solid #217346; outline-offset: 0; line-height: 6px; }
.excel-tabs { display: flex; align-items: center; height: 7px; border-top: 1px solid #bbb; }
.book { flex: none; margin-left: 36px; width: 51px; background: #fff; color: #217346; font-size: 5.2px; line-height: 6px; text-align: center; white-space: nowrap; letter-spacing: -.15px; }
.excel-tabs i { width: 6px; height: 6px; margin-left: 9px; border: .5px solid #777; border-radius: 50%; font-size: 6px; line-height: 5px; text-align: center; color: #555; }
.excel-tabs svg { margin-left: auto; }
```
